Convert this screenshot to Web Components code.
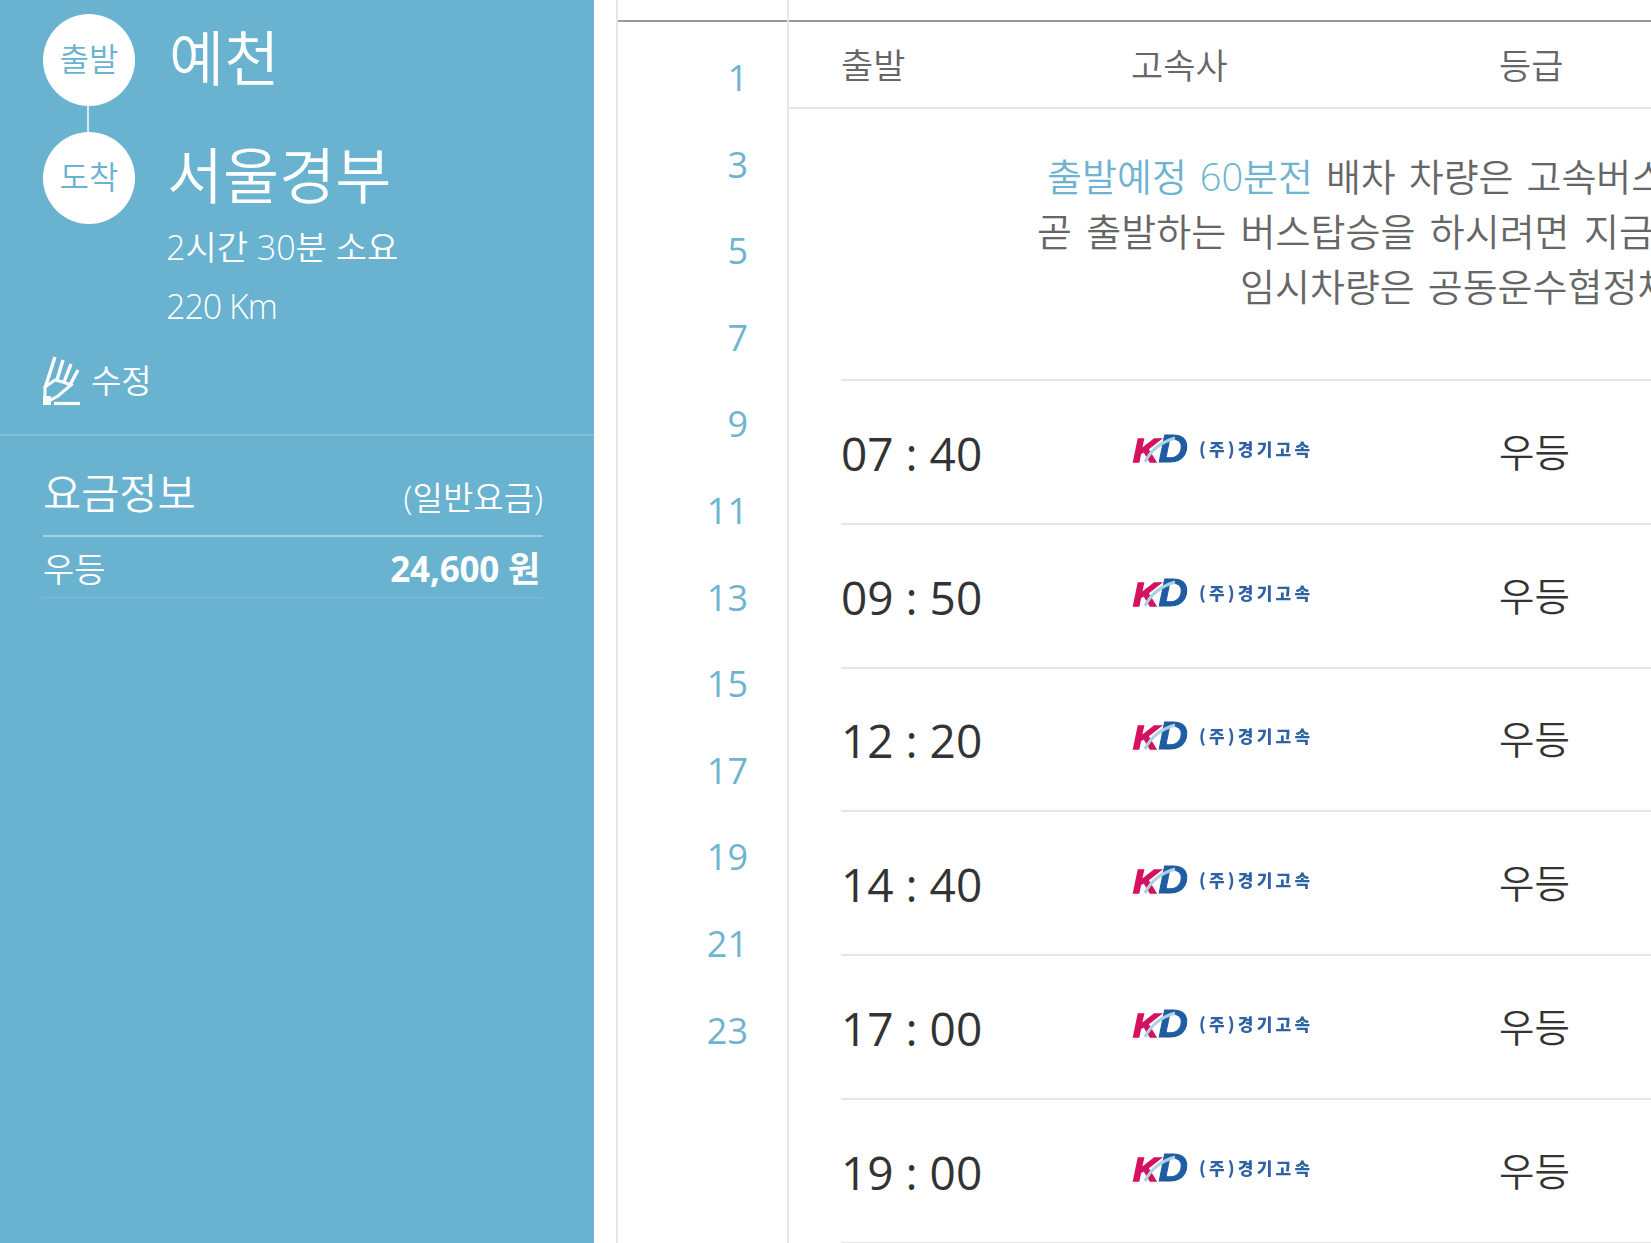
<!DOCTYPE html>
<html lang="ko">
<head>
<meta charset="utf-8">
<title>고속버스 배차조회</title>
<style>
  html, body { margin: 0; height: 100%; overflow: hidden; background: #fff; }
  body {
    display: flex;
    font-family: "Open Sans", "Noto Sans CJK KR", sans-serif;
    font-weight: 350;
  }
</style>
</head>
<body>
  <route-summary></route-summary>
  <schedule-board>
    <hour-axis slot="axis" hours="1,3,5,7,9,11,13,15,17,19,21,23"></hour-axis>
    <notice-box slot="notice"></notice-box>
    <bus-row time="07 : 40" grade="우등"></bus-row>
    <bus-row time="09 : 50" grade="우등"></bus-row>
    <bus-row time="12 : 20" grade="우등"></bus-row>
    <bus-row time="14 : 40" grade="우등"></bus-row>
    <bus-row time="17 : 00" grade="우등"></bus-row>
    <bus-row time="19 : 00" grade="우등"></bus-row>
  </schedule-board>

<script>
class RouteSummary extends HTMLElement {
  constructor() {
    super();
    this.attachShadow({ mode: 'open' });
    this.shadowRoot.innerHTML = `
      <style>
        :host {
          display: block;
          flex: none;
          width: 594px;
          height: 1243px;
          background: #69b2d0;
          color: #fff;
          box-sizing: border-box;
        }
        .stops { padding: 14px 0 0 43px; position: relative; }
        .stop { display: flex; align-items: center; height: 92px; gap: 34px; }
        .stop + .stop { margin-top: 26px; }
        .dot {
          flex: none;
          width: 92px;
          height: 92px;
          border-radius: 50%;
          background: #fff;
          color: #69b2d0;
          font-size: 32px;
          line-height: 90px;
          text-align: center;
        }
        .name { font-size: 60px; line-height: 80px; margin-top: -4px; }
        .stop + .stop .name { font-size: 61px; margin-top: -4px; margin-left: -2px; }
        .link {
          position: absolute;
          left: 87px;
          top: 106px;
          width: 2px;
          height: 26px;
          background: #d6ebf3;
        }
        .facts { padding: 0 0 0 166px; font-size: 34px; line-height: 59px; margin-top: -6px; }
        .facts .km { letter-spacing: -1px; }
        .edit {
          display: flex;
          align-items: center;
          gap: 10px;
          padding: 21px 0 0 43px;
          font-size: 33px;
          height: 50px;
        }
        .edit span { margin-top: -6px; }
        .edit svg { margin-top: -2px; }
        hr { border: 0; height: 2px; background: #82c0da; margin: 27px 0 0; }
        .fare { padding: 0 51px 0 43px; }
        .fare-head {
          display: flex;
          justify-content: space-between;
          align-items: flex-end;
          height: 99px;
          border-bottom: 2px solid #a3d1e4;
        }
        .fare-head b { font-weight: 350; font-size: 41.500px; line-height: 58px; margin-bottom: 13px; }
        .fare-head small { font-size: 33px; line-height: 50px; margin-bottom: 12px; }
        .fare-row {
          display: flex;
          justify-content: space-between;
          align-items: center;
          height: 60px;
          border-bottom: 1px solid #7fbdd8;
          font-size: 34px;
        }
        .fare-row strong { font-weight: 700; font-size: 35px; padding: 0 3px 2px 0; letter-spacing: -.2px; }
      </style>
      <div class="stops">
        <div class="link"></div>
        <div class="stop"><div class="dot">출발</div><div class="name">예천</div></div>
        <div class="stop"><div class="dot">도착</div><div class="name">서울경부</div></div>
      </div>
      <div class="facts">
        <div>2시간 30분 소요</div>
        <div class="km">220 Km</div>
      </div>
      <div class="edit">
        <svg width="38" height="50" viewBox="0 0 38 50" fill="none" stroke="#fff" stroke-width="3.400" style="filter:blur(.7px)">
          <path d="M12 1 2 32 M20 4 14 24 M28 8 21 26 M35 14 27 29"/>
          <path d="M2 31 12 24 20 26 28 29 15 40 2 47Z" stroke-width="3"/>
          <rect x="0" y="40" width="8" height="9" fill="#fff" stroke="none"/>
          <path d="M11 47.500H37" stroke-width="3.200"/>
        </svg>
        <span>수정</span>
      </div>
      <hr>
      <div class="fare">
        <div class="fare-head"><b>요금정보</b><small>(일반요금)</small></div>
        <div class="fare-row"><span>우등</span><strong>24,600 원</strong></div>
      </div>
    `;
  }
}

class ScheduleBoard extends HTMLElement {
  constructor() {
    super();
    this.attachShadow({ mode: 'open' });
    this.shadowRoot.innerHTML = `
      <style>
        :host {
          display: grid;
          grid-template-columns: 169px 1fr;
          flex: 1;
          min-width: 0;
          height: 1243px;
          margin-left: 22px;
          border-left: 2px solid #e6e6e6;
          overflow: hidden;
        }
        .left { padding-top: 20px; }
        .left-in { border-top: 2px solid #999; }
        .right { border-left: 2px solid #e6e6e6; padding-top: 20px; min-width: 0; }
        .head {
          display: grid;
          grid-template-columns: 290px 368px 1fr;
          align-items: center;
          height: 85px;
          padding-left: 52px;
          border-top: 2px solid #999;
          border-bottom: 2px solid #e6e6e6;
          color: #666;
          font-size: 35px;
        }
        .head span { margin-top: -2px; }
      </style>
      <div class="left"><div class="left-in"><slot name="axis"></slot></div></div>
      <div class="right">
        <div class="head"><span>출발</span><span>고속사</span><span>등급</span></div>
        <slot name="notice"></slot>
        <slot></slot>
      </div>
    `;
  }
}

class HourAxis extends HTMLElement {
  constructor() {
    super();
    this.attachShadow({ mode: 'open' });
    const hours = this.getAttribute('hours').split(',');
    this.shadowRoot.innerHTML = `
      <style>
        :host {
          display: grid;
          grid-auto-rows: 86.6px;
          padding: 13px 39px 0 0;
          color: #6eb4d0;
          font-size: 36px;
          font-weight: 400;
          text-align: right;
          line-height: 86.6px;
        }
      </style>
      ${hours.map(h => `<div>${h}</div>`).join('')}
    `;
  }
}

class NoticeBox extends HTMLElement {
  constructor() {
    super();
    this.attachShadow({ mode: 'open' });
    this.shadowRoot.innerHTML = `
      <style>
        :host {
          display: block;
          height: 272px;
          box-sizing: border-box;
          margin-left: 52px;
          padding-top: 40px;
          border-bottom: 2px solid #e6e6e6;
          color: #666;
          font-size: 38px;
          line-height: 55px;
          word-spacing: 3px;
          white-space: nowrap;
        }
        em { font-style: normal; color: #6eb4d0; }
        .a { padding-left: 206px; }
        .b { padding-left: 196px; word-spacing: 4.500px; }
        .c { padding-left: 399px; }
      </style>
      <div class="a"><em>출발예정 60분전</em> 배차 차량은 고속버스</div>
      <div class="b">곧 출발하는 버스탑승을 하시려면 지금</div>
      <div class="c">임시차량은 공동운수협정체</div>
    `;
  }
}

class BusRow extends HTMLElement {
  constructor() {
    super();
    this.attachShadow({ mode: 'open' });
    this.shadowRoot.innerHTML = `
      <style>
        :host {
          display: grid;
          grid-template-columns: 290px 368px 1fr;
          align-items: center;
          height: 143.8px;
          box-sizing: border-box;
          margin-left: 52px;
          border-bottom: 2px solid #e6e6e6;
          color: #333;
        }
        .time { font-size: 46px; font-weight: 400; margin-top: 2px; }
        .grade { font-size: 38.500px; margin-top: -4px; }
        svg { display: block; margin-top: -8px; }
      </style>
      <div class="time">${this.getAttribute('time')}</div>
      <svg width="190" height="56" viewBox="0 0 190 56">
        <g style="filter:blur(.7px)">
          <text x="2" y="42" textLength="55" lengthAdjust="spacingAndGlyphs" font-family="Liberation Sans" font-weight="700" font-style="italic" font-size="39"><tspan font-size="34" fill="#d4125f" stroke="#d4125f" stroke-width="1.500">K</tspan><tspan fill="#1f5ca3" stroke="#1f5ca3" stroke-width="1">D</tspan></text>
          <path d="M14 42 C20 30 30 22 44 18" fill="none" stroke="#a8d4e2" stroke-width="3"/>
          <text x="68" y="36" font-family="Noto Sans CJK KR" font-weight="900" font-size="17" letter-spacing="3.200" fill="#2f62a5">(주)경기고속</text>
        </g>
      </svg>
      <div class="grade">${this.getAttribute('grade')}</div>
    `;
  }
}

customElements.define('route-summary', RouteSummary);
customElements.define('schedule-board', ScheduleBoard);
customElements.define('hour-axis', HourAxis);
customElements.define('notice-box', NoticeBox);
customElements.define('bus-row', BusRow);
</script>
</body>
</html>
